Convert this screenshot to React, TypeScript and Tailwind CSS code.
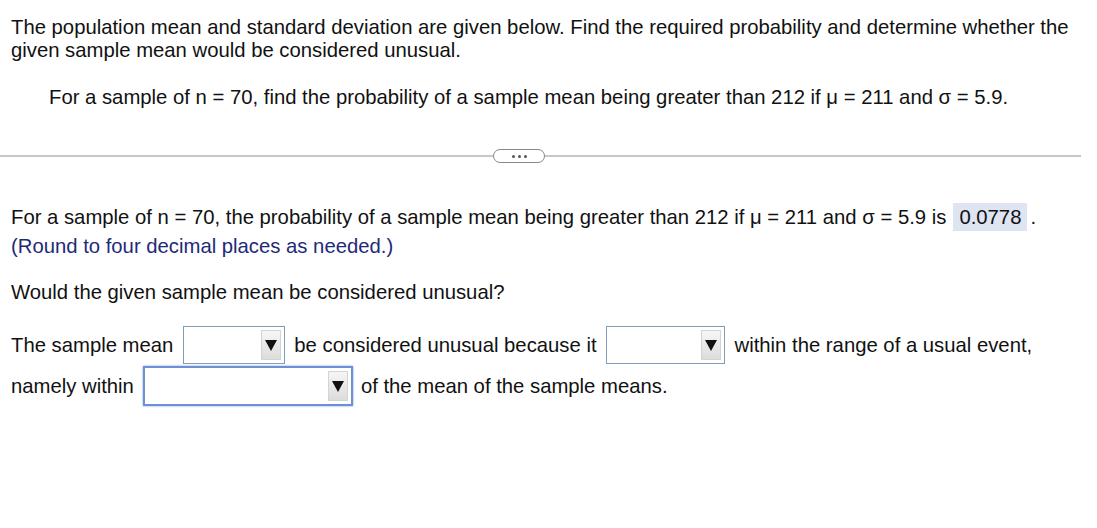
import React from 'react';

const Select: React.FC<{ width: string; focused?: boolean }> = ({ width, focused }) => (
  <span
    className={`inline-flex shrink-0 items-stretch align-middle bg-white ${width} ${
      focused
        ? 'h-[40px] border-2 border-[#6d8fd6] shadow-[0_0_2px_#7fa0e0]'
        : 'h-[38px] border border-[#7f9db9]'
    }`}
  >
    <span className="flex-1" />
    <span className="my-[3px] mr-[3px] flex w-[20px] items-center justify-center bg-gradient-to-b from-[#f6f6f6] to-[#dcdcdc] border border-[#d4d4d4]">
      <svg width="14" height="14" viewBox="0 0 14 14">
        <polygon points="1,2 13,2 7,13" fill="#111" />
      </svg>
    </span>
  </span>
);

export default function App() {
  return (
    <div className="w-[1097px] h-[528px] bg-white text-[#111] font-['Liberation_Sans',Arial,sans-serif] text-[20.3px] leading-[23px]">
      <div className="px-[11px] pt-[16px]">
        <p>
          The population mean and standard deviation are given below. Find the required probability and determine whether the given sample mean would be considered unusual.
        </p>
        <p className="mt-[24px] pl-[38px]">
          For a sample of n = 70, find the probability of a sample mean being greater than 212 if μ = 211 and σ = 5.9.
        </p>
      </div>

      <div className="relative mt-[46px] mr-[16px] flex items-center">
        <div className="h-[2px] flex-1 bg-[#c8c8c8]" />
        <button className="absolute left-[493px] top-1/2 -translate-y-1/2 flex h-[14px] w-[52px] items-center justify-center gap-[3px] rounded-full border border-[#888] bg-white">
          <span className="h-[3px] w-[3px] rounded-full bg-[#555]" />
          <span className="h-[3px] w-[3px] rounded-full bg-[#555]" />
          <span className="h-[3px] w-[3px] rounded-full bg-[#555]" />
        </button>
      </div>

      <div className="px-[11px] pt-[46px]">
        <p className="flex items-center">
          For a sample of n = 70, the probability of a sample mean being greater than 212 if μ = 211 and σ = 5.9 is
          <span className="ml-[7px] inline-flex h-[28px] items-center bg-[#dee4f1] px-[6px]">0.0778</span>
          <span className="ml-[3px]">.</span>
        </p>
        <p className="mt-[4px] text-[#1f2a78]">(Round to four decimal places as needed.)</p>
        <p className="mt-[23px]">Would the given sample mean be considered unusual?</p>

        <div className="mt-[22px] flex items-center">
          <span>The sample mean</span>
          <span className="ml-[10px]"><Select width="w-[102px]" /></span>
          <span className="ml-[9px]">be considered unusual because it</span>
          <span className="ml-[9px]"><Select width="w-[119px]" /></span>
          <span className="ml-[10px]">within the range of a usual event,</span>
        </div>
        <div className="mt-[2px] flex items-center">
          <span>namely within</span>
          <span className="ml-[9px]"><Select width="w-[210px]" focused /></span>
          <span className="ml-[8px]">of the mean of the sample means.</span>
        </div>
      </div>
    </div>
  );
}
